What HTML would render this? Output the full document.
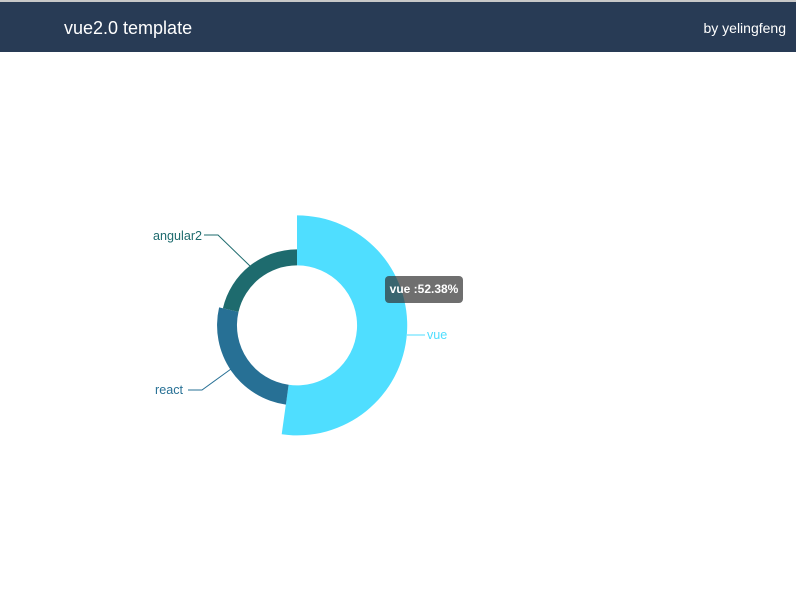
<!DOCTYPE html>
<html><head><meta charset="utf-8"><style>
html,body{margin:0;padding:0;width:796px;height:595px;background:#fff;overflow:hidden;font-family:"Liberation Sans",sans-serif}
.top{position:absolute;left:0;top:0;width:796px;height:2px;background:#c8c8c8}
.hdr{position:absolute;left:0;top:2px;width:796px;height:50px;background:#283b55;color:#fff}
.t{position:absolute;left:64px;top:16px;font-size:18px}
.b{position:absolute;right:10px;top:18px;font-size:14px}
.tip{position:absolute;left:385px;top:276px;width:78px;height:27px;background:rgba(50,50,50,0.7);border-radius:4px;color:#fff;font-size:12px;font-weight:bold;line-height:27px;text-align:center}
</style></head><body>
<div class="top"></div>
<div class="hdr"><div class="t">vue2.0 template</div><div class="b">by yelingfeng</div></div>
<svg width="796" height="595" style="position:absolute;left:0;top:0">
<path d="M297,215.4 A110,110 0 1 1 281.7,434.3 L288.6,384.8 A60,60 0 1 0 297,265.4 Z" fill="#4fdeff"/>
<path d="M285.9,404.6 A80,80 0 0 1 219.1,307.4 L238.5,311.9 A60,60 0 0 0 288.6,384.8 Z" fill="#277095"/>
<path d="M222.9,308.3 A76,76 0 0 1 297,249.4 L297,265.4 A60,60 0 0 0 238.5,311.9 Z" fill="#1e6b6e"/>
<polyline points="204,235 218,235 250,266" fill="none" stroke="#1e6b6e" stroke-width="1"/>
<polyline points="188,390 202,390 231,369" fill="none" stroke="#277095" stroke-width="1"/>
<polyline points="407,335 425,335" fill="none" stroke="#4fdeff" stroke-width="1"/>
<text x="153" y="240" font-size="12.6" fill="#1e6b6e" font-family="Liberation Sans,sans-serif">angular2</text>
<text x="155" y="394" font-size="12.6" fill="#277095" font-family="Liberation Sans,sans-serif">react</text>
<text x="427" y="339" font-size="12.6" fill="#4fdeff" font-family="Liberation Sans,sans-serif">vue</text>
</svg>
<div class="tip">vue :52.38%</div>
</body></html>
